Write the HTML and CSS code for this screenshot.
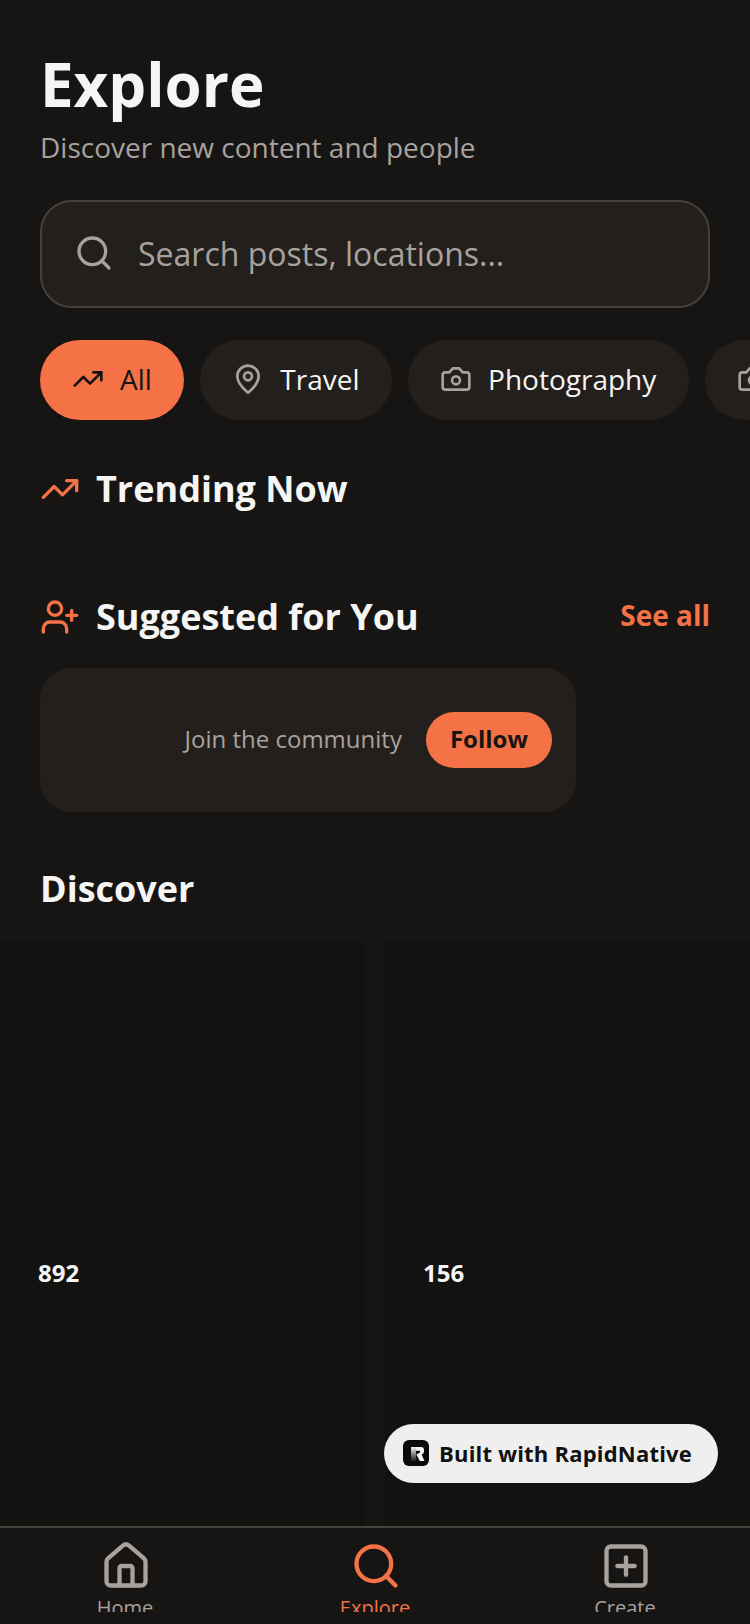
FILE: index.html
```html
<!DOCTYPE html>
<html lang="en">
<head>
    <meta charset="UTF-8">
    <meta name="viewport" content="width=device-width, initial-scale=1.0">
    <title>Explore</title>
    <link rel="stylesheet" href="styles.css">
</head>
<body>
    <div class="screen">
        <header class="top">
            <h1 class="title">Explore</h1>
            <p class="subtitle">Discover new content and people</p>
            <div class="search">
                <svg class="icon icon-40 muted" viewBox="0 0 24 24"><path d="m21 21-4.34-4.34"/><circle cx="11" cy="11" r="8"/></svg>
                <span class="search-text">Search posts, locations...</span>
            </div>
        </header>

        <div class="chips">
            <div class="chip chip-active">
                <svg class="icon icon-32" viewBox="0 0 24 24"><path d="M16 7h6v6"/><path d="m22 7-8.5 8.5-5-5L2 17"/></svg>
                <span>All</span>
            </div>
            <div class="chip">
                <svg class="icon icon-32 muted" viewBox="0 0 24 24"><path d="M20 10c0 4.993-5.539 10.193-7.399 11.799a1 1 0 0 1-1.202 0C9.539 20.193 4 14.993 4 10a8 8 0 0 1 16 0"/><circle cx="12" cy="10" r="3"/></svg>
                <span>Travel</span>
            </div>
            <div class="chip">
                <svg class="icon icon-32 muted" viewBox="0 0 24 24"><path d="M14.5 4h-5L7 7H4a2 2 0 0 0-2 2v9a2 2 0 0 0 2 2h16a2 2 0 0 0 2-2V9a2 2 0 0 0-2-2h-3l-2.5-3z"/><circle cx="12" cy="13" r="3"/></svg>
                <span>Photography</span>
            </div>
            <div class="chip chip-cut">
                <svg class="icon icon-32 muted" viewBox="0 0 24 24"><path d="M14.5 4h-5L7 7H4a2 2 0 0 0-2 2v9a2 2 0 0 0 2 2h16a2 2 0 0 0 2-2V9a2 2 0 0 0-2-2h-3l-2.5-3z"/><circle cx="12" cy="13" r="3"/></svg>
            </div>
        </div>

        <section class="section-trending">
            <div class="section-title">
                <svg class="icon icon-40 accent" viewBox="0 0 24 24"><path d="M16 7h6v6"/><path d="m22 7-8.5 8.5-5-5L2 17"/></svg>
                <h2>Trending Now</h2>
            </div>
        </section>

        <section class="section-suggested">
            <div class="section-head">
                <div class="section-title">
                    <svg class="icon icon-40 accent" viewBox="0 0 24 24"><path d="M16 21v-2a4 4 0 0 0-4-4H6a4 4 0 0 0-4 4v2"/><circle cx="9" cy="7" r="4"/><path d="M19 8v6"/><path d="M22 11h-6"/></svg>
                    <h2>Suggested for You</h2>
                </div>
                <span class="see-all">See all</span>
            </div>
            <div class="suggest-card">
                <span class="suggest-text">Join the community</span>
                <span class="follow">Follow</span>
            </div>
        </section>

        <h2 class="discover">Discover</h2>

        <div class="grid">
            <div class="cell"><span class="count">892</span></div>
            <div class="cell"><span class="count">156</span></div>
        </div>

        <nav class="tabs">
            <div class="tab">
                <svg class="icon icon-52" viewBox="0 0 24 24"><path d="M15 21v-8a1 1 0 0 0-1-1h-4a1 1 0 0 0-1 1v8"/><path d="M3 10a2 2 0 0 1 .709-1.528l7-6a2 2 0 0 1 2.582 0l7 6A2 2 0 0 1 21 10v9a2 2 0 0 1-2 2H5a2 2 0 0 1-2-2z"/></svg>
                <span class="tab-label">Home</span>
            </div>
            <div class="tab tab-active">
                <svg class="icon icon-52" viewBox="0 0 24 24"><path d="m21 21-4.34-4.34"/><circle cx="11" cy="11" r="8"/></svg>
                <span class="tab-label">Explore</span>
            </div>
            <div class="tab">
                <svg class="icon icon-52" viewBox="0 0 24 24"><rect x="3" y="3" width="18" height="18" rx="2"/><path d="M8 12h8"/><path d="M12 8v8"/></svg>
                <span class="tab-label">Create</span>
            </div>
        </nav>

        <div class="badge">
            <svg class="badge-logo" viewBox="0 0 26 26">
                <defs>
                    <linearGradient id="stemFade" x1="0" y1="0" x2="0" y2="1">
                        <stop offset="0" stop-color="#f4f4f4"/>
                        <stop offset="1" stop-color="#1c1c1c"/>
                    </linearGradient>
                </defs>
                <rect width="26" height="26" rx="6" fill="#0b0b0b"/>
                <path d="M8 7h10a3 3 0 0 1 3 3v1.5a3 3 0 0 1-2.4 2.9L21.5 21h-4.6l-3.6-6.6 3.7-1.9v-1.8H8z" fill="#f4f4f4"/>
                <path d="M8 7h5v14H8z" fill="url(#stemFade)"/>
            </svg>
            <span>Built with RapidNative</span>
        </div>
    </div>
</body>
</html>
```

FILE: styles.css
```css
* {
    box-sizing: border-box;
}

html, body {
    margin: 0;
    padding: 0;
}

body {
    background-color: #171514;
    font-family: "Open Sans", "Noto Sans", sans-serif;
    color: #f5f5f4;
}

h1, h2, p {
    margin: 0;
}

.screen {
    position: relative;
    width: 750px;
    height: 1624px;
    display: flex;
    flex-direction: column;
    overflow: hidden;
}

.icon {
    flex-shrink: 0;
    fill: none;
    stroke: currentColor;
    stroke-width: 2;
    stroke-linecap: round;
    stroke-linejoin: round;
}

.icon-32 {
    width: 32px;
    height: 32px;
}

.icon-40 {
    width: 40px;
    height: 40px;
}

.icon-52 {
    width: 52px;
    height: 52px;
    margin-left: 2px;
}

.muted {
    color: #a8a29e;
}

.accent {
    color: #f47246;
}

.top {
    padding: 48px 40px 0;
}

.title {
    font-size: 60px;
    line-height: 72px;
    font-weight: 700;
}

.subtitle {
    margin-top: 7px;
    font-size: 28px;
    line-height: 40px;
    color: #a8a29e;
}

.search {
    margin-top: 33px;
    height: 108px;
    padding: 0 32px 2px;
    display: flex;
    align-items: center;
    gap: 24px;
    background-color: #231f1c;
    border: 2px solid #44403c;
    border-radius: 32px;
}

.search-text {
    font-size: 32px;
    color: #a8a29e;
}

.chips {
    margin-top: 32px;
    padding-left: 40px;
    display: flex;
    gap: 16px;
    overflow: hidden;
}

.chip {
    flex-shrink: 0;
    height: 80px;
    padding: 0 32.5px 2px 32px;
    display: flex;
    align-items: center;
    gap: 16px;
    background-color: #231f1c;
    border-radius: 40px;
    font-size: 28px;
}

.chip-active {
    background-color: #f47246;
    color: #171514;
}

.chip-cut {
    width: 120px;
}

.section-trending {
    margin-top: 45px;
    padding: 0 40px;
}

.section-suggested {
    margin-top: 80px;
    padding: 0 40px;
}

.section-head {
    display: flex;
    align-items: center;
    justify-content: space-between;
}

.section-title {
    display: flex;
    align-items: center;
    gap: 16px;
}

.section-title h2,
.discover {
    font-size: 36px;
    line-height: 48px;
    font-weight: 700;
}

.see-all {
    margin-bottom: 4px;
    font-size: 28px;
    font-weight: 700;
    color: #f47246;
}

.suggest-card {
    margin-top: 27px;
    width: 536px;
    height: 144px;
    padding: 0 24px;
    display: flex;
    align-items: center;
    justify-content: flex-end;
    gap: 24px;
    background-color: #231f1c;
    border-radius: 32px;
}

.suggest-text {
    margin-bottom: 3px;
    font-size: 24px;
    color: #a8a29e;
}

.follow {
    height: 56px;
    padding: 0 24px 3px;
    display: flex;
    align-items: center;
    background-color: #f47246;
    border-radius: 28px;
    font-size: 24px;
    font-weight: 700;
    color: #171514;
}

.discover {
    margin: 53px 40px 0;
}

.grid {
    margin-top: 27px;
    flex: 1;
    display: grid;
    grid-template-columns: 365px 365px;
    gap: 20px;
}

.cell {
    display: flex;
    align-items: center;
    padding-left: 38px;
    padding-top: 78px;
    background-color: #121211;
}

.count {
    font-size: 24px;
    font-weight: 700;
    color: #f5f5f4;
}

.tabs {
    height: 98px;
    padding-top: 12px;
    display: grid;
    grid-template-columns: repeat(3, 1fr);
    background-color: #171514;
    border-top: 2px solid #44403c;
}

.tab {
    height: 72px;
    display: flex;
    flex-direction: column;
    align-items: center;
    overflow: hidden;
    color: #a8a29e;
}

.tab-active {
    color: #f47246;
}

.tab-label {
    margin-top: 2px;
    font-size: 20px;
    line-height: 28px;
}

/* floats over the grid */
.badge {
    position: absolute;
    left: 384px;
    top: 1424px;
    width: 334px;
    height: 59px;
    padding: 0 7px 2px 0;
    display: flex;
    align-items: center;
    justify-content: center;
    gap: 10px;
    background-color: #efefef;
    border-radius: 30px;
    font-size: 22px;
    letter-spacing: 0.2px;
    font-weight: 700;
    color: #111;
}

.badge-logo {
    width: 26px;
    height: 26px;
}
```
